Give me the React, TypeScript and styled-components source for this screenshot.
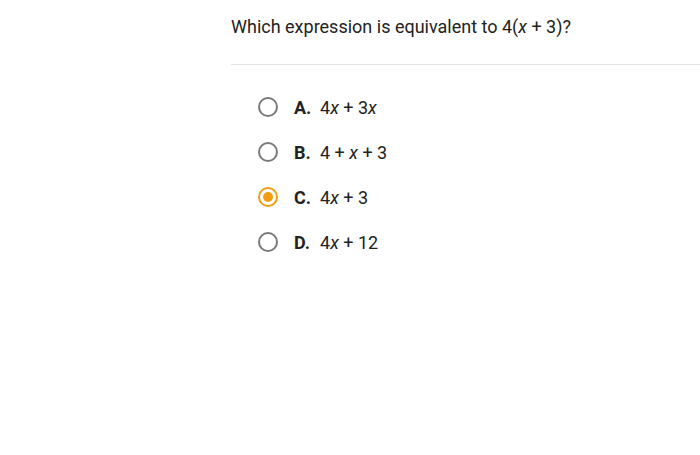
import { FC } from 'react';
import styled, { createGlobalStyle } from 'styled-components';

const GlobalStyle = createGlobalStyle`
  html, body {
    margin: 0;
    padding: 0;
    background: #ffffff;
  }
  body {
    font-family: Roboto, "Liberation Sans", Arial, sans-serif;
    color: #212121;
  }
`;

const Page = styled.div`
  width: 700px;
  height: 455px;
  padding-left: 231px;
  box-sizing: border-box;
  overflow: hidden;
`;

const Question = styled.div`
  padding-top: 16px;
  height: 65px;
  box-sizing: border-box;
  font-size: 18px;
  line-height: 22px;
  color: #222222;
  border-bottom: 1px solid #e4e4e4;
`;

const Options = styled.div`
  display: flex;
  flex-direction: column;
  padding: 20px 0 0 27px;
`;

const Row = styled.div`
  display: flex;
  align-items: center;
  height: 45px;
`;

const Radio = styled.span<{ $checked?: boolean }>`
  width: 20px;
  height: 20px;
  box-sizing: border-box;
  border-radius: 50%;
  border: 2px solid ${(p) => (p.$checked ? '#f39c12' : '#7a7a7a')};
  display: flex;
  align-items: center;
  justify-content: center;
  margin-right: 16px;
  margin-top: -1px;
  &::after {
    content: '';
    display: ${(p) => (p.$checked ? 'block' : 'none')};
    width: 10px;
    height: 10px;
    border-radius: 50%;
    background: #f39c12;
  }
`;

const Letter = styled.span`
  font-weight: 700;
  font-size: 18px;
  color: #222222;
  width: 26px;
`;

const Expr = styled.span`
  font-size: 18px;
  color: #222222;
  i {
    font-style: italic;
  }
`;

interface OptionProps {
  letter: string;
  checked?: boolean;
  children: React.ReactNode;
}

const Option: FC<OptionProps> = ({ letter, checked, children }) => (
  <Row>
    <Radio $checked={checked} />
    <Letter>{letter}.</Letter>
    <Expr>{children}</Expr>
  </Row>
);

export default function App() {
  return (
    <>
      <GlobalStyle />
      <Page>
        <Question>
          Which expression is equivalent to 4(<i>x</i> + 3)?
        </Question>
        <Options>
          <Option letter="A">
            4<i>x</i> + 3<i>x</i>
          </Option>
          <Option letter="B">
            4 + <i>x</i> + 3
          </Option>
          <Option letter="C" checked>
            4<i>x</i> + 3
          </Option>
          <Option letter="D">
            4<i>x</i> + 12
          </Option>
        </Options>
      </Page>
    </>
  );
}
